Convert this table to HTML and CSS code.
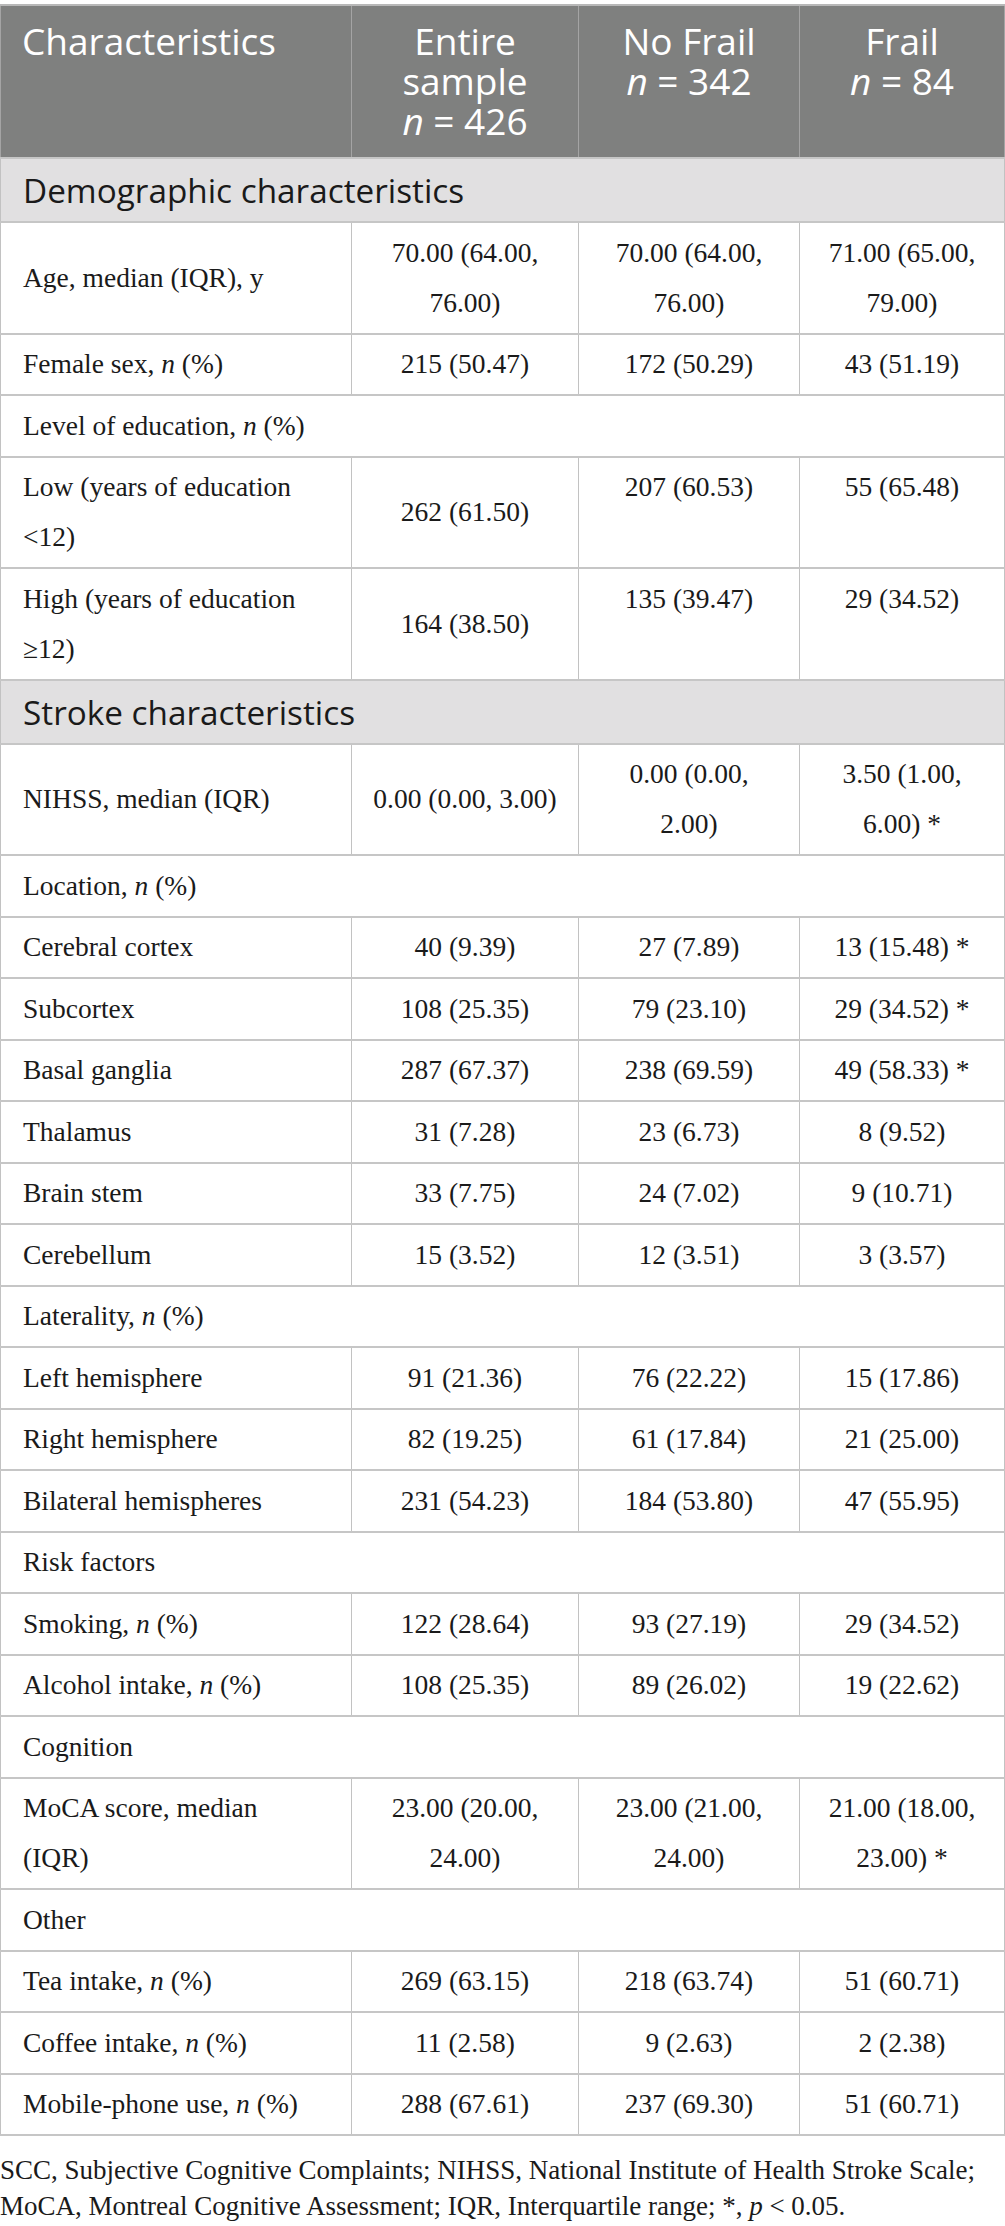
FILE: index.html
```html
<!DOCTYPE html>
<html>
<head>
<meta charset="utf-8">
<link rel="stylesheet" href="styles.css">
</head>
<body>
<table class="tbl">
<colgroup><col class="c1"><col class="c2"><col class="c3"><col class="c4"></colgroup>
<thead>
<tr><th class="lab">Characteristics</th><th>Entire<br>sample<br><i>n</i> = 426</th><th>No Frail<br><i>n</i> = 342</th><th>Frail<br><i>n</i> = 84</th></tr>
</thead>
<tbody>
<tr class="sec"><td colspan="4">Demographic characteristics</td></tr>
<tr><td class="lab">Age, median (IQR), y</td><td>70.00 (64.00,<br>76.00)</td><td>70.00 (64.00,<br>76.00)</td><td>71.00 (65.00,<br>79.00)</td></tr>
<tr><td class="lab">Female sex, <i>n</i> (%)</td><td>215 (50.47)</td><td>172 (50.29)</td><td>43 (51.19)</td></tr>
<tr><td class="lab" colspan="4">Level of education, <i>n</i> (%)</td></tr>
<tr><td class="lab">Low (years of education<br>&lt;12)</td><td>262 (61.50)</td><td class="top">207 (60.53)</td><td class="top">55 (65.48)</td></tr>
<tr><td class="lab">High (years of education<br>≥12)</td><td>164 (38.50)</td><td class="top">135 (39.47)</td><td class="top">29 (34.52)</td></tr>
<tr class="sec"><td colspan="4">Stroke characteristics</td></tr>
<tr><td class="lab">NIHSS, median (IQR)</td><td>0.00 (0.00, 3.00)</td><td>0.00 (0.00,<br>2.00)</td><td>3.50 (1.00,<br>6.00) *</td></tr>
<tr><td class="lab" colspan="4">Location, <i>n</i> (%)</td></tr>
<tr><td class="lab">Cerebral cortex</td><td>40 (9.39)</td><td>27 (7.89)</td><td>13 (15.48) *</td></tr>
<tr><td class="lab">Subcortex</td><td>108 (25.35)</td><td>79 (23.10)</td><td>29 (34.52) *</td></tr>
<tr><td class="lab">Basal ganglia</td><td>287 (67.37)</td><td>238 (69.59)</td><td>49 (58.33) *</td></tr>
<tr><td class="lab">Thalamus</td><td>31 (7.28)</td><td>23 (6.73)</td><td>8 (9.52)</td></tr>
<tr><td class="lab">Brain stem</td><td>33 (7.75)</td><td>24 (7.02)</td><td>9 (10.71)</td></tr>
<tr><td class="lab">Cerebellum</td><td>15 (3.52)</td><td>12 (3.51)</td><td>3 (3.57)</td></tr>
<tr><td class="lab" colspan="4">Laterality, <i>n</i> (%)</td></tr>
<tr><td class="lab">Left hemisphere</td><td>91 (21.36)</td><td>76 (22.22)</td><td>15 (17.86)</td></tr>
<tr><td class="lab">Right hemisphere</td><td>82 (19.25)</td><td>61 (17.84)</td><td>21 (25.00)</td></tr>
<tr><td class="lab">Bilateral hemispheres</td><td>231 (54.23)</td><td>184 (53.80)</td><td>47 (55.95)</td></tr>
<tr><td class="lab" colspan="4">Risk factors</td></tr>
<tr><td class="lab">Smoking, <i>n</i> (%)</td><td>122 (28.64)</td><td>93 (27.19)</td><td>29 (34.52)</td></tr>
<tr><td class="lab">Alcohol intake, <i>n</i> (%)</td><td>108 (25.35)</td><td>89 (26.02)</td><td>19 (22.62)</td></tr>
<tr><td class="lab" colspan="4">Cognition</td></tr>
<tr><td class="lab">MoCA score, median<br>(IQR)</td><td>23.00 (20.00,<br>24.00)</td><td>23.00 (21.00,<br>24.00)</td><td>21.00 (18.00,<br>23.00) *</td></tr>
<tr><td class="lab" colspan="4">Other</td></tr>
<tr><td class="lab">Tea intake, <i>n</i> (%)</td><td>269 (63.15)</td><td>218 (63.74)</td><td>51 (60.71)</td></tr>
<tr><td class="lab">Coffee intake, <i>n</i> (%)</td><td>11 (2.58)</td><td>9 (2.63)</td><td>2 (2.38)</td></tr>
<tr><td class="lab">Mobile-phone use, <i>n</i> (%)</td><td>288 (67.61)</td><td>237 (69.30)</td><td>51 (60.71)</td></tr>
</tbody>
</table>
<p class="note">SCC, Subjective Cognitive Complaints; NIHSS, National Institute of Health Stroke Scale;<br>MoCA, Montreal Cognitive Assessment; IQR, Interquartile range; *, <i>p</i> &lt; 0.05.</p>
</body>
</html>
```
FILE: styles.css
```css
html, body {
  margin: 0;
  padding: 0;
  background: #ffffff;
}

body {
  padding-top: 4px;
}

.tbl {
  border-collapse: collapse;
  table-layout: fixed;
  width: 1004px;
  font-family: "Liberation Serif", "Times New Roman", serif;
  font-size: 27.5px;
  color: #1a1a1a;
}

.c1 { width: 351px; }
.c2 { width: 227px; }
.c3 { width: 221px; }
.c4 { width: 205px; }

.tbl th {
  background: #7f807f;
  color: #ffffff;
  font-family: "Open Sans", "Liberation Sans", sans-serif;
  font-weight: 400;
  font-size: 37px;
  line-height: 40px;
  text-align: center;
  vertical-align: top;
  padding: 15px 8px 16px;
  border: 1px solid #a4a4a4;
  border-top: 2px solid #b8b8b8;
}

.tbl th.lab {
  text-align: left;
  padding-left: 21px;
}

.tbl td {
  border-left: 1px solid #c2c2c2;
  border-right: 1px solid #c2c2c2;
  border-top: 2px solid #c6c6c6;
  border-bottom: 2px solid #c6c6c6;
  padding: 4.75px 10px;
  line-height: 50px;
  text-align: center;
  vertical-align: middle;
}

.tbl td.lab {
  text-align: left;
  padding-left: 22px;
}

.tbl td.top {
  vertical-align: top;
}

.tbl tr.sec td {
  background: #e1e0e1;
  font-family: "Open Sans", "Liberation Sans", sans-serif;
  font-size: 33.3px;
  line-height: 50px;
  padding: 6px 22px;
  text-align: left;
  color: #1a1a1a;
}

.note {
  margin: 16px 0 0 0;
  font-family: "Liberation Serif", "Times New Roman", serif;
  font-size: 27px;
  line-height: 36px;
  color: #1a1a1a;
}
```
